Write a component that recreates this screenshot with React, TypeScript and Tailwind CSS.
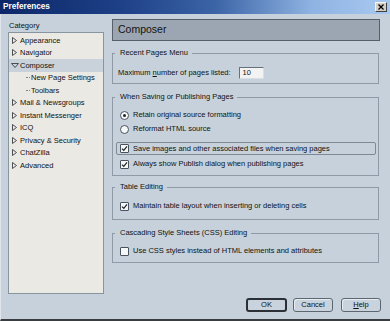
import { ReactNode } from 'react';

const tree = [
  { label: 'Appearance', kind: 'closed' },
  { label: 'Navigator', kind: 'closed' },
  { label: 'Composer', kind: 'open', selected: true },
  { label: 'New Page Settings', kind: 'child' },
  { label: 'Toolbars', kind: 'child' },
  { label: 'Mail & Newsgroups', kind: 'closed' },
  { label: 'Instant Messenger', kind: 'closed' },
  { label: 'ICQ', kind: 'closed' },
  { label: 'Privacy & Security', kind: 'closed' },
  { label: 'ChatZilla', kind: 'closed' },
  { label: 'Advanced', kind: 'closed' },
];

const Twisty = ({ open }: { open: boolean }) =>
  open ? (
    <svg width="8" height="5" viewBox="0 0 8 5">
      <path d="M0.5 0.5 L7.5 0.5 L4 4.5 Z" fill="none" stroke="#3a3f45" strokeWidth="0.9" />
    </svg>
  ) : (
    <svg width="8" height="7" viewBox="0 0 8 7">
      <path d="M1.5 0.5 L5.5 3.5 L1.5 6.5 Z" fill="none" stroke="#3a3f45" strokeWidth="0.9" />
    </svg>
  );

const Check = ({ checked }: { checked?: boolean }) => (
  <span className="flex h-[9px] w-[9px] shrink-0 items-center justify-center rounded-[1px] border border-[#4a535d] bg-[#f6f7f8]">
    {checked && (
      <svg width="7" height="7" viewBox="0 0 7 7">
        <path d="M1 3.6 L2.8 5.4 L6 1.4" fill="none" stroke="#1e2226" strokeWidth="1.2" />
      </svg>
    )}
  </span>
);

const Radio = ({ checked }: { checked?: boolean }) => (
  <span className="flex h-[9px] w-[9px] shrink-0 items-center justify-center rounded-full border border-[#4a535d] bg-[#f6f7f8]">
    {checked && <span className="h-[3px] w-[3px] rounded-full bg-[#1e2226]" />}
  </span>
);

const Row = ({ control, children, className = '' }: { control: ReactNode; children: ReactNode; className?: string }) => (
  <div className={`flex h-[12px] items-center gap-[4px] pl-[7px] ${className}`}>
    {control}
    <span>{children}</span>
  </div>
);

const Group = ({ title, className = '', children }: { title: string; className?: string; children: ReactNode }) => (
  <fieldset className={`w-[267px] border border-[#8f9aa6] ${className}`}>
    <legend className="ml-[2px] pr-[4px] pl-[5px] leading-[10px]">{title}</legend>
    {children}
  </fieldset>
);

export default function App() {
  return (
    <div className="flex h-[321px] w-[390px] flex-col overflow-hidden bg-[#c6d1db] font-['Liberation_Sans',Arial,sans-serif] text-[7.5px] text-[#111]">
      <div className="flex h-[14px] shrink-0 items-center bg-[linear-gradient(90deg,#0c2769_0%,#1d3f85_30%,#3b64a6_55%,#8fb3e2_80%,#a8c9f0_100%)] pl-[3px] pr-[3px]">
        <span className="text-[8.2px] font-bold text-white">Preferences</span>
        <span className="ml-auto flex h-[10px] w-[12px] items-center justify-center border border-[#f4f4f4] border-r-[#404040] border-b-[#404040] bg-[#d4d0c8]">
          <svg width="6" height="6" viewBox="0 0 6 6">
            <path d="M0.5 0.5 L5.5 5.5 M5.5 0.5 L0.5 5.5" stroke="#000" strokeWidth="1.3" />
          </svg>
        </span>
      </div>

      <div className="flex flex-1 flex-col border-b-2 border-l border-b-[#3a3d40] border-l-[#dfe5eb]">
        <div className="flex pt-[5px] pl-[7px]">
          <div className="flex w-[96px] flex-col">
            <div className="mt-[2px] mb-[1px] h-[10px] pl-[1px] leading-[10px]">Category</div>
            <div className="h-[262px] border border-[#8894a0] bg-[#ebe9e4] pt-[1px]">
              {tree.map((item) => (
                <div
                  key={item.label}
                  className={`flex h-[12.5px] items-center ${item.selected ? 'bg-[#c9d1da]' : ''}`}
                >
                  {item.kind === 'child' ? (
                    <>
                      <span className="ml-[17px] w-[4px] border-t border-dotted border-[#7d858d]" />
                      <span className="ml-[1px]">{item.label}</span>
                    </>
                  ) : (
                    <>
                      <span className="ml-[2px] flex w-[8px] justify-center">
                        <Twisty open={item.kind === 'open'} />
                      </span>
                      <span className="ml-[1px]">{item.label}</span>
                    </>
                  )}
                </div>
              ))}
            </div>
          </div>

          <div className="ml-[8px] flex w-[268px] flex-col">
            <div className="flex h-[22px] items-center border border-[#56606b] bg-[#9ba6b2] pl-[5px] text-[10.5px] text-[#141414]">
              Composer
            </div>

            <Group title="Recent Pages Menu" className="mt-[7px] pb-[4px]">
              <div className="mt-[9px] flex h-[12px] items-center pl-[5px]">
                <span>
                  Maximum <span className="underline">n</span>umber of pages listed:
                </span>
                <span className="ml-[8px] flex h-[12px] w-[25px] items-center border border-[#66707b] border-r-[#d8dee4] border-b-[#d8dee4] bg-[#f3f3f3] pl-[3px]">
                  10
                </span>
              </div>
            </Group>

            <Group title="When Saving or Publishing Pages" className="mt-[8px] pb-[5px]">
              <Row className="mt-[7px]" control={<Radio checked />}>
                Retain original source formatting
              </Row>
              <Row className="mt-[2px]" control={<Radio />}>
                Reformat HTML source
              </Row>
              <div className="mt-[7px] mr-[2px] ml-[3px] flex h-[13px] items-center gap-[4px] rounded-[2px] border border-[#7e8994] pl-[3px]">
                <Check checked />
                <span>Save images and other associated files when saving pages</span>
              </div>
              <Row className="mt-[3px]" control={<Check checked />}>
                Always show Publish dialog when publishing pages
              </Row>
            </Group>

            <Group title="Table Editing" className="mt-[6px] pb-[7px]">
              <Row className="mt-[8px]" control={<Check checked />}>
                Maintain table layout when inserting or deleting cells
              </Row>
            </Group>

            <Group title="Cascading Style Sheets (CSS) Editing" className="mt-[8px] pb-[5px]">
              <Row className="mt-[7px]" control={<Check />}>
                Use CSS styles instead of HTML elements and attributes
              </Row>
            </Group>
          </div>
        </div>

        <div className="mt-[4px] flex h-[14px] justify-end pr-[9px]">
          <button className="flex h-[14px] w-[41px] items-center justify-center rounded-[3px] border-2 border-[#2b3036] bg-[#c9d3dd]">
            OK
          </button>
          <button className="ml-[6px] flex h-[14px] w-[40px] items-center justify-center rounded-[3px] border border-[#5c6670] bg-[#c9d3dd] shadow-[inset_1px_1px_0_#e8edf2]">
            Cancel
          </button>
          <button className="ml-[8px] flex h-[14px] w-[40px] items-center justify-center rounded-[3px] border border-[#5c6670] bg-[#c9d3dd] shadow-[inset_1px_1px_0_#e8edf2]">
            <span>
              <span className="underline">H</span>elp
            </span>
          </button>
        </div>
      </div>
    </div>
  );
}
